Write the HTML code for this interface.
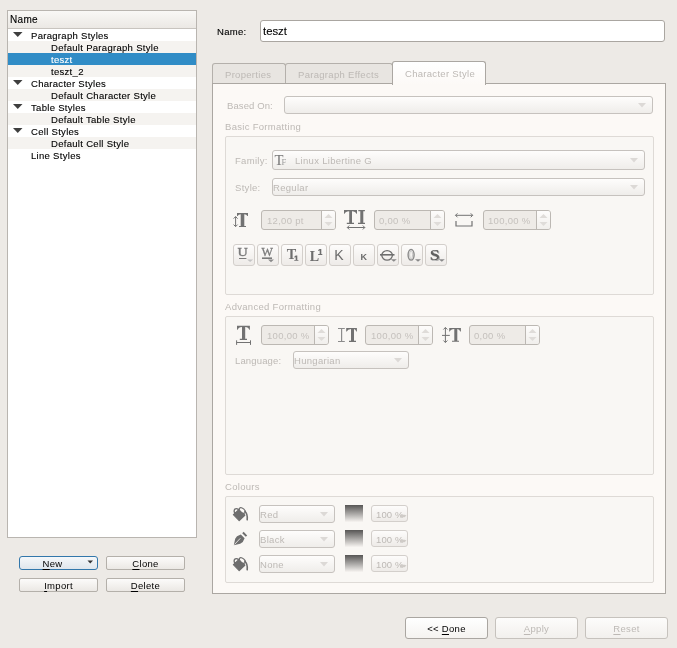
<!DOCTYPE html>
<html><head><meta charset="utf-8"><style>
html,body{margin:0;padding:0}
body{width:677px;height:648px;position:relative;overflow:hidden;background:#edeae6;font-family:"Liberation Sans",sans-serif;font-size:9.5px}
.t{position:absolute;line-height:14px;white-space:nowrap;will-change:transform;letter-spacing:0.3px}
.b{-webkit-text-stroke:0.12px currentColor}
u{text-decoration:underline;text-underline-offset:2px}
svg{position:absolute;left:0;top:0;will-change:transform}
</style></head><body>
<div style="position:absolute;left:7px;top:10px;width:190px;height:528px;box-sizing:border-box;border:1px solid #b9b5b0;background:#fff"></div>
<div style="position:absolute;left:8px;top:11px;width:188px;height:17px;box-sizing:border-box;background:linear-gradient(#f9f8f6,#ebe8e4)"></div>
<div style="position:absolute;left:8px;top:28px;width:188px;height:1px;box-sizing:border-box;background:#c8c4bf"></div>
<div class="t b" style="left:9.8px;top:13.04px;font-size:10px;color:#000;">Name</div>
<div class="t b" style="left:31px;top:28.71px;font-size:9.5px;color:#000;">Paragraph Styles</div>
<div style="position:absolute;left:8px;top:41px;width:188px;height:12px;box-sizing:border-box;background:#f5f3f0"></div>
<div class="t b" style="left:51px;top:40.71px;font-size:9.5px;color:#000;">Default Paragraph Style</div>
<div style="position:absolute;left:8px;top:53px;width:188px;height:12px;box-sizing:border-box;background:#308cc6"></div>
<div class="t b" style="left:51px;top:52.71px;font-size:9.5px;color:#fff;">teszt</div>
<div style="position:absolute;left:8px;top:65px;width:188px;height:12px;box-sizing:border-box;background:#f5f3f0"></div>
<div class="t b" style="left:51px;top:64.71px;font-size:9.5px;color:#000;">teszt_2</div>
<div class="t b" style="left:31px;top:76.71px;font-size:9.5px;color:#000;">Character Styles</div>
<div style="position:absolute;left:8px;top:89px;width:188px;height:12px;box-sizing:border-box;background:#f5f3f0"></div>
<div class="t b" style="left:51px;top:88.71px;font-size:9.5px;color:#000;">Default Character Style</div>
<div class="t b" style="left:31px;top:100.71px;font-size:9.5px;color:#000;">Table Styles</div>
<div style="position:absolute;left:8px;top:113px;width:188px;height:12px;box-sizing:border-box;background:#f5f3f0"></div>
<div class="t b" style="left:51px;top:112.71px;font-size:9.5px;color:#000;">Default Table Style</div>
<div class="t b" style="left:31px;top:124.71px;font-size:9.5px;color:#000;">Cell Styles</div>
<div style="position:absolute;left:8px;top:137px;width:188px;height:12px;box-sizing:border-box;background:#f5f3f0"></div>
<div class="t b" style="left:51px;top:136.71px;font-size:9.5px;color:#000;">Default Cell Style</div>
<div class="t b" style="left:31px;top:148.71px;font-size:9.5px;color:#000;">Line Styles</div>
<div style="position:absolute;left:19px;top:556px;width:79px;height:14px;box-sizing:border-box;border:1px solid #b4b0aa;border-radius:2px;background:linear-gradient(#fcfbfa,#ebe8e4);border-color:#3277ab;border-radius:3px;background:linear-gradient(#f5f8fa,#dfe6ec)"></div>
<div class="t" style="left:13px;width:79px;text-align:center;top:557.01px;font-size:9.5px;color:#000"><u>N</u>ew</div>
<div style="position:absolute;left:106px;top:556px;width:79px;height:14px;box-sizing:border-box;border:1px solid #b4b0aa;border-radius:2px;background:linear-gradient(#fcfbfa,#ebe8e4);"></div>
<div class="t" style="left:106px;width:79px;text-align:center;top:557.01px;font-size:9.5px;color:#000"><u>C</u>lone</div>
<div style="position:absolute;left:19px;top:578px;width:79px;height:14px;box-sizing:border-box;border:1px solid #b4b0aa;border-radius:2px;background:linear-gradient(#fcfbfa,#ebe8e4);"></div>
<div class="t" style="left:19px;width:79px;text-align:center;top:579.11px;font-size:9.5px;color:#000"><u>I</u>mport</div>
<div style="position:absolute;left:106px;top:578px;width:79px;height:14px;box-sizing:border-box;border:1px solid #b4b0aa;border-radius:2px;background:linear-gradient(#fcfbfa,#ebe8e4);"></div>
<div class="t" style="left:106px;width:79px;text-align:center;top:579.11px;font-size:9.5px;color:#000"><u>D</u>elete</div>
<div class="t b" style="left:216.5px;top:24.71px;font-size:9.5px;color:#000;">Name:</div>
<div style="position:absolute;left:260px;top:20px;width:405px;height:22px;box-sizing:border-box;border:1px solid #aaa6a1;border-radius:3px;background:#fff"></div>
<div class="t b" style="left:263.2px;top:24.08px;font-size:11.3px;color:#000;letter-spacing:0">teszt</div>
<div style="position:absolute;left:212px;top:63px;width:74px;height:22px;box-sizing:border-box;border:1px solid #b4b0ab;border-bottom:none;border-radius:3px 3px 0 0;background:#e8e5e1"></div>
<div style="position:absolute;left:285px;top:63px;width:108px;height:22px;box-sizing:border-box;border:1px solid #b4b0ab;border-bottom:none;border-radius:3px 3px 0 0;background:#e8e5e1"></div>
<div style="position:absolute;left:212px;top:83px;width:454px;height:511px;box-sizing:border-box;border:1px solid #aba7a2;background:#fcf9f6"></div>
<div style="position:absolute;left:392px;top:61px;width:94px;height:24px;box-sizing:border-box;border:1px solid #aba7a2;border-bottom:none;border-radius:3px 3px 0 0;background:linear-gradient(#fff,#fcf9f6)"></div>
<div class="t" style="left:224.6px;top:67.71px;font-size:9.5px;color:#bdb9b5;">Properties</div>
<div class="t" style="left:297.7px;top:67.71px;font-size:9.5px;color:#bdb9b5;">Paragraph Effects</div>
<div class="t" style="left:404.8px;top:66.91px;font-size:9.5px;color:#bdb9b5;">Character Style</div>
<div class="t" style="left:227.2px;top:98.51px;font-size:9.5px;color:#bdb9b5;letter-spacing:0.1px">Based On:</div>
<div style="position:absolute;left:284px;top:96px;width:369px;height:18px;box-sizing:border-box;border:1px solid #c6c2be;border-radius:3px;background:linear-gradient(#fefdfc,#efedea)"></div>
<div class="t" style="left:225.0px;top:119.71px;font-size:9.5px;color:#bdb9b5;">Basic Formatting</div>
<div style="position:absolute;left:225px;top:136px;width:429px;height:159px;box-sizing:border-box;border:1px solid #dedad6;border-radius:2px;background:#f9f7f4"></div>
<div class="t" style="left:234.7px;top:154.11px;font-size:9.5px;color:#bdb9b5;">Family:</div>
<div style="position:absolute;left:272px;top:150px;width:373px;height:20px;box-sizing:border-box;border:1px solid #c6c2be;border-radius:3px;background:linear-gradient(#fefdfc,#efedea)"></div>
<div class="t" style="left:295px;top:153.91px;font-size:9.5px;color:#bdb9b5;">Linux Libertine G</div>
<div class="t" style="left:234.7px;top:181.11px;font-size:9.5px;color:#bdb9b5;">Style:</div>
<div style="position:absolute;left:272px;top:178px;width:373px;height:18px;box-sizing:border-box;border:1px solid #c6c2be;border-radius:3px;background:linear-gradient(#fefdfc,#efedea)"></div>
<div class="t" style="left:273.2px;top:180.91px;font-size:9.5px;color:#bdb9b5;">Regular</div>
<div style="position:absolute;left:261px;top:210px;width:75px;height:20px;box-sizing:border-box;border:1px solid #bcb8b3;border-radius:3px;background:#eeebe7"></div>
<div style="position:absolute;left:321px;top:211px;width:14px;height:18px;box-sizing:border-box;border-left:1px solid #bcb8b3;border-radius:0 2px 2px 0;background:linear-gradient(#fdfcfb,#f1efec)"></div>
<div class="t" style="left:266.7px;top:213.71px;font-size:9.5px;color:#c5c1bd;">12,00 pt</div>
<div style="position:absolute;left:374px;top:210px;width:71px;height:20px;box-sizing:border-box;border:1px solid #bcb8b3;border-radius:3px;background:#eeebe7"></div>
<div style="position:absolute;left:430px;top:211px;width:14px;height:18px;box-sizing:border-box;border-left:1px solid #bcb8b3;border-radius:0 2px 2px 0;background:linear-gradient(#fdfcfb,#f1efec)"></div>
<div class="t" style="left:379px;top:213.71px;font-size:9.5px;color:#c5c1bd;">0,00 %</div>
<div style="position:absolute;left:483px;top:210px;width:68px;height:20px;box-sizing:border-box;border:1px solid #bcb8b3;border-radius:3px;background:#eeebe7"></div>
<div style="position:absolute;left:536px;top:211px;width:14px;height:18px;box-sizing:border-box;border-left:1px solid #bcb8b3;border-radius:0 2px 2px 0;background:linear-gradient(#fdfcfb,#f1efec)"></div>
<div class="t" style="left:488.4px;top:213.71px;font-size:9.5px;color:#c5c1bd;">100,00 %</div>
<div style="position:absolute;left:233px;top:244px;width:22px;height:22px;box-sizing:border-box;border:1px solid #d3cfcb;border-radius:3px;background:linear-gradient(#fdfcfb,#eeebe8)"></div>
<div style="position:absolute;left:257px;top:244px;width:22px;height:22px;box-sizing:border-box;border:1px solid #d3cfcb;border-radius:3px;background:linear-gradient(#fdfcfb,#eeebe8)"></div>
<div style="position:absolute;left:281px;top:244px;width:22px;height:22px;box-sizing:border-box;border:1px solid #d3cfcb;border-radius:3px;background:linear-gradient(#fdfcfb,#eeebe8)"></div>
<div style="position:absolute;left:305px;top:244px;width:22px;height:22px;box-sizing:border-box;border:1px solid #d3cfcb;border-radius:3px;background:linear-gradient(#fdfcfb,#eeebe8)"></div>
<div style="position:absolute;left:329px;top:244px;width:22px;height:22px;box-sizing:border-box;border:1px solid #d3cfcb;border-radius:3px;background:linear-gradient(#fdfcfb,#eeebe8)"></div>
<div style="position:absolute;left:353px;top:244px;width:22px;height:22px;box-sizing:border-box;border:1px solid #d3cfcb;border-radius:3px;background:linear-gradient(#fdfcfb,#eeebe8)"></div>
<div style="position:absolute;left:377px;top:244px;width:22px;height:22px;box-sizing:border-box;border:1px solid #d3cfcb;border-radius:3px;background:linear-gradient(#fdfcfb,#eeebe8)"></div>
<div style="position:absolute;left:401px;top:244px;width:22px;height:22px;box-sizing:border-box;border:1px solid #d3cfcb;border-radius:3px;background:linear-gradient(#fdfcfb,#eeebe8)"></div>
<div style="position:absolute;left:425px;top:244px;width:22px;height:22px;box-sizing:border-box;border:1px solid #d3cfcb;border-radius:3px;background:linear-gradient(#fdfcfb,#eeebe8)"></div>
<div class="t" style="left:225.0px;top:299.71px;font-size:9.5px;color:#bdb9b5;">Advanced Formatting</div>
<div style="position:absolute;left:225px;top:316px;width:429px;height:159px;box-sizing:border-box;border:1px solid #dedad6;border-radius:2px;background:#f9f7f4"></div>
<div style="position:absolute;left:261px;top:325px;width:68px;height:20px;box-sizing:border-box;border:1px solid #bcb8b3;border-radius:3px;background:#eeebe7"></div>
<div style="position:absolute;left:314px;top:326px;width:14px;height:18px;box-sizing:border-box;border-left:1px solid #bcb8b3;border-radius:0 2px 2px 0;background:linear-gradient(#fdfcfb,#f1efec)"></div>
<div class="t" style="left:267px;top:328.71px;font-size:9.5px;color:#c5c1bd;">100,00 %</div>
<div style="position:absolute;left:365px;top:325px;width:68px;height:20px;box-sizing:border-box;border:1px solid #bcb8b3;border-radius:3px;background:#eeebe7"></div>
<div style="position:absolute;left:418px;top:326px;width:14px;height:18px;box-sizing:border-box;border-left:1px solid #bcb8b3;border-radius:0 2px 2px 0;background:linear-gradient(#fdfcfb,#f1efec)"></div>
<div class="t" style="left:370.8px;top:328.71px;font-size:9.5px;color:#c5c1bd;">100,00 %</div>
<div style="position:absolute;left:469px;top:325px;width:71px;height:20px;box-sizing:border-box;border:1px solid #bcb8b3;border-radius:3px;background:#eeebe7"></div>
<div style="position:absolute;left:525px;top:326px;width:14px;height:18px;box-sizing:border-box;border-left:1px solid #bcb8b3;border-radius:0 2px 2px 0;background:linear-gradient(#fdfcfb,#f1efec)"></div>
<div class="t" style="left:474.4px;top:328.71px;font-size:9.5px;color:#c5c1bd;">0,00 %</div>
<div class="t" style="left:234.9px;top:353.71px;font-size:9.5px;color:#bdb9b5;letter-spacing:0.15px">Language:</div>
<div style="position:absolute;left:293px;top:351px;width:116px;height:18px;box-sizing:border-box;border:1px solid #c6c2be;border-radius:3px;background:linear-gradient(#fefdfc,#efedea)"></div>
<div class="t" style="left:294.4px;top:353.71px;font-size:9.5px;color:#bdb9b5;">Hungarian</div>
<div class="t" style="left:225.0px;top:479.71px;font-size:9.5px;color:#bdb9b5;">Colours</div>
<div style="position:absolute;left:225px;top:496px;width:429px;height:87px;box-sizing:border-box;border:1px solid #dedad6;border-radius:2px;background:#f9f7f4"></div>
<div style="position:absolute;left:259px;top:505px;width:76px;height:18px;box-sizing:border-box;border:1px solid #c6c2be;border-radius:3px;background:linear-gradient(#fefdfc,#efedea)"></div>
<div class="t" style="left:259.9px;top:507.91px;font-size:9.5px;color:#bdb9b5;">Red</div>
<div style="position:absolute;left:345px;top:505px;width:18px;height:17px;box-sizing:border-box;background:linear-gradient(#575655,#f7f4f1)"></div>
<div style="position:absolute;left:371px;top:505px;width:37px;height:17px;box-sizing:border-box;border:1px solid #d3cfcb;border-radius:3px;background:linear-gradient(#fdfcfb,#eeebe8)"></div>
<div class="t" style="left:375.8px;top:507.61px;font-size:9.5px;color:#bdb9b5;letter-spacing:0.15px">100 %</div>
<div style="position:absolute;left:259px;top:530px;width:76px;height:18px;box-sizing:border-box;border:1px solid #c6c2be;border-radius:3px;background:linear-gradient(#fefdfc,#efedea)"></div>
<div class="t" style="left:259.9px;top:532.91px;font-size:9.5px;color:#bdb9b5;">Black</div>
<div style="position:absolute;left:345px;top:530px;width:18px;height:17px;box-sizing:border-box;background:linear-gradient(#575655,#f7f4f1)"></div>
<div style="position:absolute;left:371px;top:530px;width:37px;height:17px;box-sizing:border-box;border:1px solid #d3cfcb;border-radius:3px;background:linear-gradient(#fdfcfb,#eeebe8)"></div>
<div class="t" style="left:375.8px;top:532.61px;font-size:9.5px;color:#bdb9b5;letter-spacing:0.15px">100 %</div>
<div style="position:absolute;left:259px;top:555px;width:76px;height:18px;box-sizing:border-box;border:1px solid #c6c2be;border-radius:3px;background:linear-gradient(#fefdfc,#efedea)"></div>
<div class="t" style="left:259.9px;top:557.91px;font-size:9.5px;color:#bdb9b5;">None</div>
<div style="position:absolute;left:345px;top:555px;width:18px;height:17px;box-sizing:border-box;background:linear-gradient(#575655,#f7f4f1)"></div>
<div style="position:absolute;left:371px;top:555px;width:37px;height:17px;box-sizing:border-box;border:1px solid #d3cfcb;border-radius:3px;background:linear-gradient(#fdfcfb,#eeebe8)"></div>
<div class="t" style="left:375.8px;top:557.61px;font-size:9.5px;color:#bdb9b5;letter-spacing:0.15px">100 %</div>
<div style="position:absolute;left:405px;top:617px;width:83px;height:22px;box-sizing:border-box;border:1px solid #b4b0aa;border-radius:2px;background:linear-gradient(#fcfbfa,#ebe8e4);border-color:#aaa6a1;border-radius:3px;background:linear-gradient(#fff,#f5f3f0)"></div>
<div class="t" style="left:405px;width:83px;text-align:center;top:621.71px;font-size:9.5px;color:#000">&lt;&lt; <u>D</u>one</div>
<div style="position:absolute;left:495px;top:617px;width:83px;height:22px;box-sizing:border-box;border:1px solid #b4b0aa;border-radius:2px;background:linear-gradient(#fcfbfa,#ebe8e4);border-color:#c6c2bd;border-radius:3px;background:linear-gradient(#fdfcfb,#f2f0ed)"></div>
<div class="t" style="left:495px;width:83px;text-align:center;top:621.71px;font-size:9.5px;color:#bdb9b5"><u>A</u>pply</div>
<div style="position:absolute;left:585px;top:617px;width:83px;height:22px;box-sizing:border-box;border:1px solid #b4b0aa;border-radius:2px;background:linear-gradient(#fcfbfa,#ebe8e4);border-color:#c6c2bd;border-radius:3px;background:linear-gradient(#fdfcfb,#f2f0ed)"></div>
<div class="t" style="left:585px;width:83px;text-align:center;top:621.71px;font-size:9.5px;color:#bdb9b5"><u>R</u>eset</div>
<svg width="677" height="648" viewBox="0 0 677 648">
<path d="M13 32H22.5L17.75 37Z" fill="#3f3f3f"/>
<path d="M13 80H22.5L17.75 85Z" fill="#3f3f3f"/>
<path d="M13 104H22.5L17.75 109Z" fill="#3f3f3f"/>
<path d="M13 128H22.5L17.75 133Z" fill="#3f3f3f"/>
<path d="M87.5 560.5H93.0L90.25 563.5Z" fill="#333"/>
<path d="M638 103.0H646L642.0 107.5Z" fill="#dcd9d6"/>
<path d="M630 158.0H638L634.0 162.5Z" fill="#dcd9d6"/>
<text x="274.6" y="165" font-family="Liberation Serif" font-size="14" fill="#777" textLength="9" lengthAdjust="spacingAndGlyphs">T</text>
<text x="281.6" y="164.6" font-family="Liberation Serif" font-size="8.5" fill="#9c9c9c">F</text>
<path d="M630 185.0H638L634.0 189.5Z" fill="#dcd9d6"/>
<path d="M324.5 218H332.5L328.5 214Z" fill="#dfdcd9"/>
<path d="M324.5 222H332.5L328.5 226Z" fill="#dfdcd9"/>
<path d="M433.5 218H441.5L437.5 214Z" fill="#dfdcd9"/>
<path d="M433.5 222H441.5L437.5 226Z" fill="#dfdcd9"/>
<path d="M539.5 218H547.5L543.5 214Z" fill="#dfdcd9"/>
<path d="M539.5 222H547.5L543.5 226Z" fill="#dfdcd9"/>
<path d="M317.5 333H325.5L321.5 329Z" fill="#dfdcd9"/>
<path d="M317.5 337H325.5L321.5 341Z" fill="#dfdcd9"/>
<path d="M421.5 333H429.5L425.5 329Z" fill="#dfdcd9"/>
<path d="M421.5 337H429.5L425.5 341Z" fill="#dfdcd9"/>
<path d="M528.5 333H536.5L532.5 329Z" fill="#dfdcd9"/>
<path d="M528.5 337H536.5L532.5 341Z" fill="#dfdcd9"/>
<path d="M394 358.0H402L398.0 362.5Z" fill="#dcd9d6"/>
<path d="M320 512.0H328L324.0 516.5Z" fill="#dcd9d6"/>
<path d="M320 537.0H328L324.0 541.5Z" fill="#dcd9d6"/>
<path d="M320 562.0H328L324.0 566.5Z" fill="#dcd9d6"/>
<path d="M237 213H248V216H247.4Q246.6 214.39999999999998 244.3 214.2V225.9H246V227H239V225.9H240.7V214.2Q238.4 214.39999999999998 237.6 216H237Z" fill="#727272"/>
<path d="M235.6 216.6V226.6M233.6 218.6L235.6 216.6L237.6 218.6M233.6 224.6L235.6 226.6L237.6 224.6" stroke="#727272" stroke-width="1" fill="none"/>
<path d="M344 210H357V213.8H356.4Q355.6 211.39999999999998 352 211.2V222.8H354V223.9H346.8V222.8H349.2V211.2Q345.4 211.39999999999998 344.6 213.8H344Z" fill="#727272"/>
<path d="M358.3 210H364.9V211.2H363.3V222.7H365V223.9H358V222.7H360.3V211.2H358.3Z" fill="#727272"/>
<path d="M347.3 227.5H364.8M349.3 225.5L347.3 227.5L349.3 229.5M362.8 225.5L364.8 227.5L362.8 229.5" stroke="#727272" stroke-width="1" fill="none"/>
<path d="M455.5 215.3H472.7M457.5 213.3L455.5 215.3L457.5 217.3M470.7 213.3L472.7 215.3L470.7 217.3" stroke="#727272" stroke-width="1" fill="none"/>
<path d="M456 220.9V226H472V220.9" stroke="#727272" stroke-width="1.2" fill="none"/>
<path d="M237 325.8H249.9V329.8H249.3Q248.5 327.1 245.2 326.90000000000003V338.79999999999995H247V339.9H239.8V338.79999999999995H242V326.90000000000003Q238.4 327.1 237.6 329.8H237Z" fill="#727272"/>
<path d="M236.6 342.5H250.5M236.6 340.3V344.9M250.5 340.3V344.9" stroke="#727272" stroke-width="1" fill="none"/>
<path d="M338 328H344.8V328.9H342.2V341H344.8V341.9H338V341H341V328.9H338Z" fill="#8c8c8c"/>
<path d="M346.2 328H356.9V331.6H356.29999999999995Q355.5 329.3 354 329.1V340.79999999999995H356V341.9H349V340.79999999999995H351V329.1Q347.59999999999997 329.3 346.8 331.6H346.2Z" fill="#727272"/>
<path d="M445.4 327.5V342.5M443.4 329.5L445.4 327.5L447.4 329.5M443.4 340.5L445.4 342.5L447.4 340.5M442 335.4H449.8" stroke="#727272" stroke-width="1" fill="none"/>
<path d="M449.2 328H460.9V331.6H460.29999999999995Q459.5 329.3 457.3 329.1V340.7H459V341.8H452V340.7H454.3V329.1Q450.59999999999997 329.3 449.8 331.6H449.2Z" fill="#727272"/>
<text x="237.6" y="256" font-family="Liberation Serif" font-size="12.3" fill="#7a7a7a" stroke="#7a7a7a" stroke-width="0.35" textLength="10.3" lengthAdjust="spacingAndGlyphs">U</text>
<rect x="239" y="258" width="7.4" height="1" fill="#7a7a7a"/>
<path d="M247.1 259.6H253.1L250.1 262.0Z" fill="#c4c4c4"/>
<text x="261.6" y="256" font-family="Liberation Serif" font-size="12.3" fill="#7a7a7a" stroke="#7a7a7a" stroke-width="0.3" textLength="11.4" lengthAdjust="spacingAndGlyphs">W</text>
<rect x="262" y="257.4" width="10" height="1.6" fill="#7a7a7a"/>
<path d="M268 259.6H274L271.0 262.20000000000005Z" fill="#8a8a8a"/>
<text x="286.7" y="259" font-family="Liberation Serif" font-weight="bold" font-size="15" fill="#6e6e6e" textLength="9.5" lengthAdjust="spacingAndGlyphs">T</text>
<path d="M295.7 255.6H297.3V259.9H298.4V260.8H294.3V259.9H295.7V257.2L294.3 257.6V256.8Z" fill="#6e6e6e"/>
<text x="309.8" y="260.8" font-family="Liberation Serif" font-weight="bold" font-size="15.2" fill="#6e6e6e" textLength="9.4" lengthAdjust="spacingAndGlyphs">L</text>
<path d="M319.7 248.9H321.3V254H322.3V254.9H318.2V254H319.7V250.6L318.2 251V250.1Z" fill="#6e6e6e"/>
<text x="334.2" y="260" font-family="Liberation Sans" font-size="14.3" fill="#6b6b6b" textLength="9.4" lengthAdjust="spacingAndGlyphs">K</text>
<text x="360.5" y="259.6" font-family="Liberation Sans" font-weight="bold" font-size="9.6" fill="#6b6b6b" textLength="6.5" lengthAdjust="spacingAndGlyphs">K</text>
<ellipse cx="387.1" cy="255.35" rx="5.3" ry="4.7" stroke="#6e6e6e" stroke-width="1.3" fill="none"/>
<rect x="380" y="254" width="14.5" height="1.6" fill="#6e6e6e"/>
<path d="M390.8 259.2H396.8L393.8 261.8Z" fill="#8a8a8a"/>
<ellipse cx="411.1" cy="254.8" rx="3" ry="5.3" stroke="#8a8a8a" stroke-width="1.4" fill="none"/>
<ellipse cx="411.1" cy="254.8" rx="1.5" ry="3.9" stroke="#bdbdbd" stroke-width="0.8" fill="none"/>
<path d="M415 259.2H421L418.0 261.8Z" fill="#8a8a8a"/>
<text x="430.8" y="261.2" font-family="Liberation Serif" font-weight="bold" font-size="15.5" fill="#b0b0b0" textLength="10" lengthAdjust="spacingAndGlyphs">S</text>
<text x="429.8" y="260.4" font-family="Liberation Serif" font-weight="bold" font-size="15.5" fill="#5f5f5f" textLength="10" lengthAdjust="spacingAndGlyphs">S</text>
<path d="M438.8 259.2H444.8L441.8 261.8Z" fill="#8a8a8a"/>
<g transform="translate(0 0)"><g><path d="M233.4 514.6L239.4 509.2L244.8 515.2L239.2 520.6Z" fill="#6e6e6e" stroke="#6e6e6e" stroke-width="1.2" stroke-linejoin="round"/><circle cx="236.4" cy="510.9" r="2.3" fill="none" stroke="#6e6e6e" stroke-width="1.3"/><ellipse cx="242.3" cy="510.4" rx="3.5" ry="2.0" transform="rotate(40 242.3 510.4)" fill="#fcf9f6" stroke="#6e6e6e" stroke-width="1.2"/><path d="M244.9 511.4Q247.8 514 247.2 519.8" fill="none" stroke="#6e6e6e" stroke-width="1.6" stroke-linecap="round"/></g></g>
<g transform="translate(0 50)"><g><path d="M233.4 514.6L239.4 509.2L244.8 515.2L239.2 520.6Z" fill="#6e6e6e" stroke="#6e6e6e" stroke-width="1.2" stroke-linejoin="round"/><circle cx="236.4" cy="510.9" r="2.3" fill="none" stroke="#6e6e6e" stroke-width="1.3"/><ellipse cx="242.3" cy="510.4" rx="3.5" ry="2.0" transform="rotate(40 242.3 510.4)" fill="#fcf9f6" stroke="#6e6e6e" stroke-width="1.2"/><path d="M244.9 511.4Q247.8 514 247.2 519.8" fill="none" stroke="#6e6e6e" stroke-width="1.6" stroke-linecap="round"/></g></g>
<path d="M233.8 545.2L235.2 538.8L237 536.2L240.8 534.4L244.6 538.2L242.8 542L240.2 543.8Z" fill="#6e6e6e"/>
<path d="M242.2 533.2L243.6 531.8L247.2 535.4L245.8 536.8Z" fill="#6e6e6e"/>
<path d="M234.5 544.5L240.3 538.3" stroke="#fcf9f6" stroke-width="0.8"/>
<path d="M400.5 514.8H404.5L406.5 515.6L404.5 517.2H401Z" fill="#cfcbc7"/>
<path d="M400.5 539.8H404.5L406.5 540.6L404.5 542.2H401Z" fill="#cfcbc7"/>
<path d="M400.5 564.8H404.5L406.5 565.6L404.5 567.2H401Z" fill="#cfcbc7"/>
</svg>
</body></html>
